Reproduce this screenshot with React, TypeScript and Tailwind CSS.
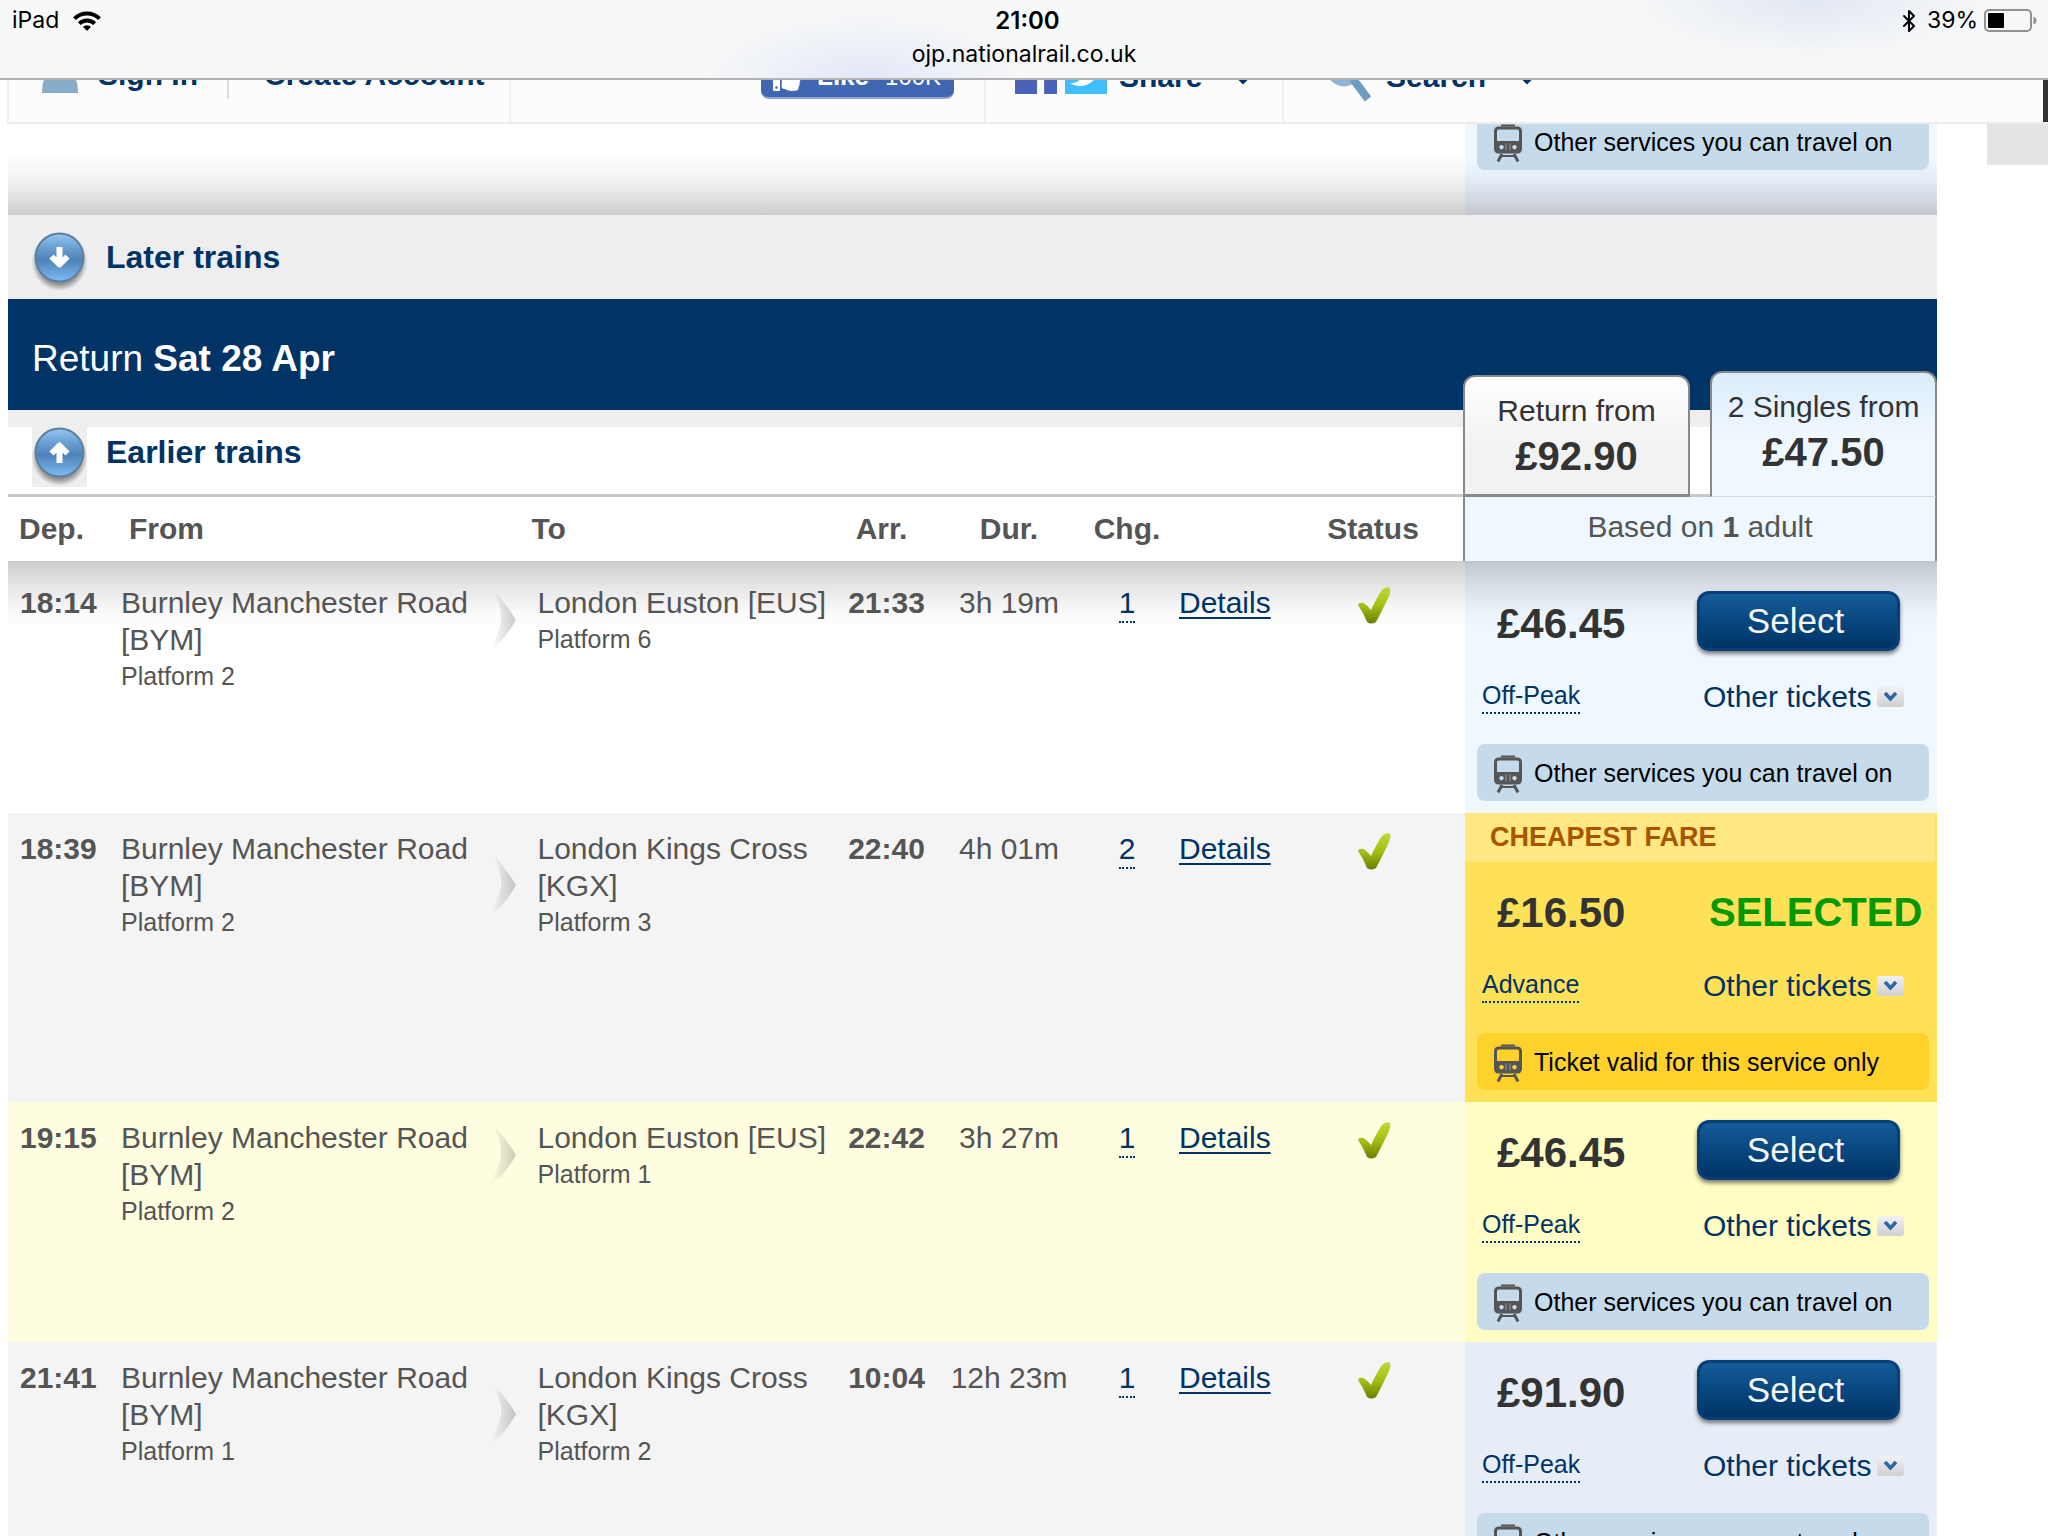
import type { ReactNode } from "react";
import clsx from "clsx";
import { Bluetooth } from "lucide-react";
import { FaFacebookF, FaThumbsUp, FaTwitter } from "react-icons/fa";

interface Stop {
  name: string;
  platform: string;
}

interface Journey {
  dep: string;
  from: Stop;
  to: Stop;
  arr: string;
  dur: string;
  changes: number;
  price: string;
  ticket: string;
  note: string;
  cheapest?: boolean;
  rowClass: string;
  fareClass: string;
}

const JOURNEYS: Journey[] = [
  {
    dep: "18:14",
    from: { name: "Burnley Manchester Road [BYM]", platform: "Platform 2" },
    to: { name: "London Euston [EUS]", platform: "Platform 6" },
    arr: "21:33",
    dur: "3h 19m",
    changes: 1,
    price: "£46.45",
    ticket: "Off-Peak",
    note: "Other services you can travel on",
    rowClass: "bg-white",
    fareClass: "bg-[#eff7ff]",
  },
  {
    dep: "18:39",
    from: { name: "Burnley Manchester Road [BYM]", platform: "Platform 2" },
    to: { name: "London Kings Cross [KGX]", platform: "Platform 3" },
    arr: "22:40",
    dur: "4h 01m",
    changes: 2,
    price: "£16.50",
    ticket: "Advance",
    note: "Ticket valid for this service only",
    cheapest: true,
    rowClass: "bg-[#f4f4f4]",
    fareClass: "bg-[#ffe157]",
  },
  {
    dep: "19:15",
    from: { name: "Burnley Manchester Road [BYM]", platform: "Platform 2" },
    to: { name: "London Euston [EUS]", platform: "Platform 1" },
    arr: "22:42",
    dur: "3h 27m",
    changes: 1,
    price: "£46.45",
    ticket: "Off-Peak",
    note: "Other services you can travel on",
    rowClass: "bg-[#fffde0]",
    fareClass: "bg-[#fffcc4]",
  },
  {
    dep: "21:41",
    from: { name: "Burnley Manchester Road [BYM]", platform: "Platform 1" },
    to: { name: "London Kings Cross [KGX]", platform: "Platform 2" },
    arr: "10:04",
    dur: "12h 23m",
    changes: 1,
    price: "£91.90",
    ticket: "Off-Peak",
    note: "Other services you can travel on",
    rowClass: "bg-[#f4f4f4]",
    fareClass: "bg-[#e6edf6]",
  },
];

const TOP_SHADOW =
  "bg-[linear-gradient(rgba(0,0,0,0.2),rgba(0,0,0,0.1)_24px,rgba(0,0,0,0.02)_52px,transparent_68px)]";

export default function App() {
  return (
    <div className="h-screen overflow-hidden bg-white font-['Liberation_Sans',Arial,sans-serif] text-[30px] leading-[37px] text-[#555]">
      <StatusBar />
      <SiteNav />
      <main className="-mt-[11px] ml-2 mr-[111px]">
        {/* Tail of the outbound results */}
        <div className="flex h-[102px] justify-end bg-[linear-gradient(white_40%,#f4f4f4_62%,#e2e2e2_82%,#cdcdcd)]">
          <div className="w-[472px] bg-[linear-gradient(#eff7ff_45%,#e6eef7_62%,#d6dce5_82%,#c2c6d0)]">
            <ServiceNote>Other services you can travel on</ServiceNote>
          </div>
        </div>
        <div className="flex h-[84px] items-start bg-[#eee] pl-6 pt-[17px]">
          <MoreTrains direction="down" label="Later trains" />
        </div>

        <section className="relative">
          <h2 className="flex h-[111px] items-center bg-[#003366] pl-6 pt-2 text-[37px] text-white">
            <span>
              Return <strong>Sat 28 Apr</strong>
            </span>
          </h2>
          <div className="h-[17px] bg-[#eee]" />
          <div className="flex h-[67px] items-start pl-6">
            <MoreTrains direction="up" label="Earlier trains" boxed />
          </div>
          <div className="absolute -bottom-[3px] right-0 flex w-[474px] items-end justify-between">
            <FareTab label="Return from" price="£92.90" />
            <FareTab label="2 Singles from" price="£47.50" active />
          </div>
        </section>

        <JourneyTable />
      </main>
      <aside className="absolute right-0 top-[124px] h-[41px] w-[61px] bg-[#e4e4e4]" />
    </div>
  );
}

function StatusBar() {
  return (
    <header className="relative z-20 h-20 border-b-2 border-[#b2b2b4] bg-[#f7f8f8] bg-[radial-gradient(ellipse_170px_70px_at_865px_80px,#e2e8f6,transparent),radial-gradient(ellipse_190px_60px_at_1810px_0px,#e2e8f3,transparent)] font-['Inter',sans-serif] text-[23px] text-black">
      <div className="grid h-[41px] grid-cols-3 items-center pl-3 pr-[11px]">
        <div className="flex items-center gap-3.5">
          <span>iPad</span>
          <svg viewBox="0 0 28 20" className="h-5 w-7" fill="none" stroke="black" strokeWidth="4">
            <path d="M1.5 7.6a18 18 0 0 1 25 0" />
            <path d="M6.3 12.6a11.2 11.2 0 0 1 15.4 0" />
            <path d="M14 20l-4-4.2a6 6 0 0 1 8 0z" fill="black" stroke="none" />
          </svg>
        </div>
        <span className="pl-1.5 text-center text-2xl font-semibold">21:00</span>
        <div className="flex items-center justify-end gap-1.5">
          <Bluetooth className="h-7 w-6" strokeWidth={2} />
          <span>39%</span>
          <svg viewBox="0 0 53 24" className="h-6 w-[53px]">
            <rect x="1" y="1" width="46" height="21" rx="4" fill="none" stroke="#919191" strokeWidth="2" />
            <rect x="4" y="4" width="16" height="15" rx="1" fill="black" />
            <path d="M49.500 7.500q3 1 3 4t-3 4z" fill="#919191" />
          </svg>
        </div>
      </div>
      <p className="text-center leading-[27px]">ojp.nationalrail.co.uk</p>
    </header>
  );
}

function SiteNav() {
  return (
    <nav className="relative z-10 -mt-[53px] ml-[7px] flex h-[97px] border-b-2 border-[#ececec] bg-[#fcfcfc] font-bold text-[#003366]">
      <a href="#signin" className="flex w-[220px] items-center gap-5 border-l-2 border-[#eee] pl-[33px]">
        <svg viewBox="0 0 36 40" className="h-10 w-9" fill="#8aaccb">
          <circle cx="18" cy="9" r="9" />
          <path d="M0 38c0-12 3-18 9-19h18c6 1 9 7 9 19z" />
        </svg>
        Sign In
      </a>
      <a href="#register" className="flex w-[284px] items-center border-r-2 border-[#eee]">
        <span className="border-l-2 border-[#ddd] py-1.5 pl-[35px]">Create Account</span>
      </a>
      <div className="flex w-[475px] items-center justify-end border-r-2 border-[#eee] pr-[30px]">
        <button className="flex h-12 w-[193px] items-center gap-4 rounded-lg border-b-2 border-[#8fa1d6] bg-[#4267b2] pl-3 pt-1.5 text-[26px] text-white">
          <FaThumbsUp className="h-7 w-7" />
          <span className="flex gap-4">
            Like <span className="text-2xl font-normal leading-[37px]">100K</span>
          </span>
        </button>
      </div>
      <a href="#share" className="flex w-[298px] items-center border-r-2 border-[#eee] pl-[29px] pt-1">
        <span className="mb-2 flex h-[42px] w-[42px] items-end justify-end bg-[#4a63b8] pr-1 text-white">
          <FaFacebookF className="h-9 w-6" />
        </span>
        <span className="mb-2 ml-2 flex h-[42px] w-[42px] items-center justify-center bg-[#40beff] text-white">
          <FaTwitter className="h-8 w-8" />
        </span>
        <span className="ml-3">Share</span>
        <NavCaret />
      </a>
      <a href="#search" className="flex items-center pl-[42px] pt-1">
        <svg viewBox="0 0 46 50" className="h-[50px] w-[46px]" fill="none" stroke="#6f9cc2" strokeWidth="7">
          <circle cx="18" cy="17" r="14" stroke="#8db4d2" />
          <path d="M27 27l15 20" strokeWidth="8" />
        </svg>
        <span className="ml-3.5">Search</span>
        <NavCaret />
      </a>
      <span className="ml-auto w-[5px] bg-[#333]" />
    </nav>
  );
}

function NavCaret() {
  return (
    <svg viewBox="0 0 18 14" className="ml-8 mt-1 h-3.5 w-[18px]" fill="none" stroke="#003366" strokeWidth="5">
      <path d="M2 2l7 7 7-7" />
    </svg>
  );
}

function MoreTrains({ direction, label, boxed }: { direction: "up" | "down"; label: string; boxed?: boolean }) {
  return (
    <a href="#more" className="flex items-start gap-[19px] text-[32px] font-bold text-[#003366]">
      <svg viewBox="0 0 55 60" className={clsx("h-[60px] w-[55px]", boxed && "bg-[#eee]")}>
        <defs>
          <linearGradient id={`orb-${direction}`} x1="0" y1="0" x2="0" y2="1">
            <stop offset="0" stopColor="#93c6f3" />
            <stop offset="0.3" stopColor="#6b9fd2" />
            <stop offset="0.55" stopColor="#4f82b8" />
            <stop offset="1" stopColor="#7cbcf5" />
          </linearGradient>
          <radialGradient id={`orb-shade-${direction}`}>
            <stop offset="0.75" stopColor="black" stopOpacity="0.4" />
            <stop offset="1" stopColor="black" stopOpacity="0" />
          </radialGradient>
        </defs>
        <ellipse cx="27.500" cy="30" rx="28" ry="29" fill={`url(#orb-shade-${direction})`} />
        <circle cx="27.500" cy="25.500" r="24" fill={`url(#orb-${direction})`} stroke="#5e7f9f" strokeWidth="2" />
        <g fill="none" stroke="white" strokeWidth="6" strokeLinejoin="round">
          {direction === "down" ? (
            <path d="M27.500 15v17M19.500 24.500l8 8 8-8" />
          ) : (
            <path d="M27.500 36V19M19.500 26.500l8-8 8 8" />
          )}
        </g>
      </svg>
      <span className="pt-[7px]">{label}</span>
    </a>
  );
}

function FareTab({ label, price, active }: { label: string; price: string; active?: boolean }) {
  return (
    <button
      className={clsx(
        "flex w-[227px] flex-col items-center rounded-t-xl border-x-2 border-t-2 border-[#888] pt-4 text-[#333]",
        active
          ? "h-[126px] border-b border-b-[#d3dae2] bg-linear-to-b from-[#dbecfd] to-[#eff7ff] to-50%"
          : "h-[122px] border-b-3 bg-linear-to-b from-white to-[#f2f2f2] to-60%"
      )}
    >
      <span className="leading-9">{label}</span>
      <span className="text-[40px] font-bold leading-[54px]">{price}</span>
    </button>
  );
}

function JourneyTable() {
  return (
    <table className="w-full table-fixed border-separate border-spacing-0">
      <colgroup>
        <col className="w-[109px]" />
        <col className="w-[19%]" />
        <col />
        <col className="w-[87px]" />
        <col className="w-[158px]" />
        <col className="w-[78px]" />
        <col className="w-[117px]" />
        <col className="w-[182px]" />
        <col className="w-[472px]" />
      </colgroup>
      <thead>
        <tr className="h-[67px] text-left [&>th]:border-t-3 [&>th]:border-t-[#c8c8c8] [&>th]:pb-0.5">
          <th className="pl-[11px]">Dep.</th>
          <th className="pl-3">From</th>
          <th className="pl-12">To</th>
          <th className="pr-2.5 text-center">Arr.</th>
          <th className="text-center">Dur.</th>
          <th className="text-center">Chg.</th>
          <th />
          <th className="border-r-2 border-r-[#888] text-center">Status</th>
          <th className="border-r-2 border-r-[#888] bg-[#eff7ff] text-center font-normal">
            <div className="pb-1">
              Based on <strong>1</strong> adult
            </div>
          </th>
        </tr>
      </thead>
      <tbody>
        {JOURNEYS.map((journey, i) => (
          <JourneyRow key={journey.dep} journey={journey} first={i === 0} />
        ))}
      </tbody>
    </table>
  );
}

function JourneyRow({ journey, first }: { journey: Journey; first: boolean }) {
  const cell = first ? clsx("pt-[23px]", TOP_SHADOW) : "pt-[17px]";
  return (
    <tr className={clsx("align-top", journey.rowClass)}>
      <td className={clsx(cell, "pl-3 font-bold")}>{journey.dep}</td>
      <td className={clsx(cell, "pl-1")}>
        <StopName stop={journey.from} />
      </td>
      <td className={cell}>
        <div className="flex items-center">
          <Arrow />
          <StopName stop={journey.to} />
        </div>
      </td>
      <td className={clsx(cell, "text-center font-bold")}>{journey.arr}</td>
      <td className={clsx(cell, "text-center")}>{journey.dur}</td>
      <td className={clsx(cell, "text-center")}>
        <a href="#changes" className="inline-block border-b-2 border-dotted border-[#003366] text-[#003366]">
          {journey.changes}
        </a>
      </td>
      <td className={clsx(cell, "pl-[13px]")}>
        <a href="#details" className="text-[#003366] underline decoration-2 underline-offset-4">
          Details
        </a>
      </td>
      <td className={cell}>
        <Tick />
      </td>
      <td className={clsx(journey.fareClass, first && TOP_SHADOW)}>
        <Fare journey={journey} first={first} />
      </td>
    </tr>
  );
}

function StopName({ stop }: { stop: Stop }) {
  return (
    <div>
      <div>{stop.name}</div>
      <div className="text-[25px]">{stop.platform}</div>
    </div>
  );
}

function Fare({ journey, first }: { journey: Journey; first: boolean }) {
  return (
    <>
      {journey.cheapest && (
        <div className="mr-0.5 h-[49px] bg-[#ffe883] pl-[25px] pt-1.5 text-[27px] font-bold text-[#a85400]">
          CHEAPEST FARE
        </div>
      )}
      <div className={clsx("grid grid-cols-[232px_1fr]", first ? "pt-[30px]" : "pt-[18px]")}>
        <div className="flex h-[60px] items-center pl-8 pt-1 text-[42px] font-bold text-[#333]">{journey.price}</div>
        {journey.cheapest ? (
          <div className="flex h-[60px] items-center pl-3 pt-1 text-[40px] font-bold text-[#090]">SELECTED</div>
        ) : (
          <button className="h-[60px] w-[203px] rounded-xl border-3 border-[#073f78] bg-linear-to-b from-[#155c98] to-[#003366] pb-0.5 pr-1.5 text-[35px] text-[#f4f7fa] shadow-[0_3px_4px_rgba(0,0,0,0.5)]">
            Select
          </button>
        )}
        <div className="flex items-start pl-[17px] pt-7">
          <a
            href="#ticket"
            className="border-b-2 border-dotted border-[#003366] text-[25px] leading-[33px] text-[#003366]"
          >
            {journey.ticket}
          </a>
        </div>
        <button className="mb-[30px] mt-[27px] flex h-9 items-center gap-1.5 pl-1.5 text-[#003366]">
          Other tickets
          <svg viewBox="0 0 27 20" className="mt-0.5 h-5 w-[27px]">
            <defs>
              <linearGradient id="drop" x1="0" y1="0" x2="0" y2="1">
                <stop offset="0" stopColor="#f1f1f1" />
                <stop offset="1" stopColor="#d0d0d0" />
              </linearGradient>
            </defs>
            <rect width="27" height="20" rx="3" fill="url(#drop)" />
            <path d="M8 6l5.500 6L19 6" fill="none" stroke="#2a66a5" strokeWidth="3.500" />
          </svg>
        </button>
      </div>
      <ServiceNote selected={journey.cheapest}>{journey.note}</ServiceNote>
    </>
  );
}

function ServiceNote({ selected, children }: { selected?: boolean; children: ReactNode }) {
  return (
    <div
      className={clsx(
        "mb-3 ml-3 mr-2 flex h-[57px] items-center gap-3 rounded-lg pl-[17px] pt-0.5 text-[25px] text-black",
        selected ? "bg-[#ffd22b]" : "bg-[#c5daeb]"
      )}
    >
      <TrainIcon />
      {children}
    </div>
  );
}

function TrainIcon() {
  return (
    <svg viewBox="0 0 28 38" className="h-[38px] w-7" fill="none" stroke="#555">
      <path d="M7 1.500h14" strokeWidth="2" />
      <rect x="1.500" y="4" width="25" height="24" rx="3" strokeWidth="3" />
      <path
        d="M1 17h26v9a3 3 0 0 1-3 3H4a3 3 0 0 1-3-3zM7.500 21a2.200 2.200 0 1 0 .01 0zM20.500 21a2.200 2.200 0 1 0 .01 0z"
        fill="#555"
        fillRule="evenodd"
        stroke="none"
      />
      <path d="M12 19.500v7M16 19.500v7" stroke="#999" strokeWidth="1" />
      <path d="M8 30l-4 7.500M20 30l4 7.500" strokeWidth="3" />
      <path d="M6 32h16" strokeWidth="2" />
    </svg>
  );
}

function Arrow() {
  return (
    <svg viewBox="0 0 30 62" className="ml-0.5 mr-[22px] h-[62px] w-[30px] shrink-0">
      <defs>
        <linearGradient id="arrow" x1="0" y1="0" x2="1" y2="0">
          <stop offset="0.1" stopColor="#000" stopOpacity="0" />
          <stop offset="1" stopColor="#000" stopOpacity="0.2" />
        </linearGradient>
      </defs>
      <path d="M7 0Q19 12 30 30Q19 50 2 62Q14 42 15 30Q16 16 7 0z" fill="url(#arrow)" />
    </svg>
  );
}

function Tick() {
  return (
    <svg viewBox="0 0 34 38" className="mx-auto mt-0.5 h-[38px] w-[34px]" role="img" aria-label="On time">
      <defs>
        <linearGradient id="tick" x1="0" y1="0" x2="0" y2="1">
          <stop offset="0" stopColor="#bfd834" />
          <stop offset="0.5" stopColor="#a3bf14" />
          <stop offset="1" stopColor="#6d7d00" />
        </linearGradient>
      </defs>
      <path
        d="M1 19Q2 16 6 17Q9 18 14 24Q20 11 25 4Q29 0 33 2Q34 5 32 10Q25 25 19 36Q14 39 10 36Q6 26 1 19z"
        fill="url(#tick)"
      />
    </svg>
  );
}
